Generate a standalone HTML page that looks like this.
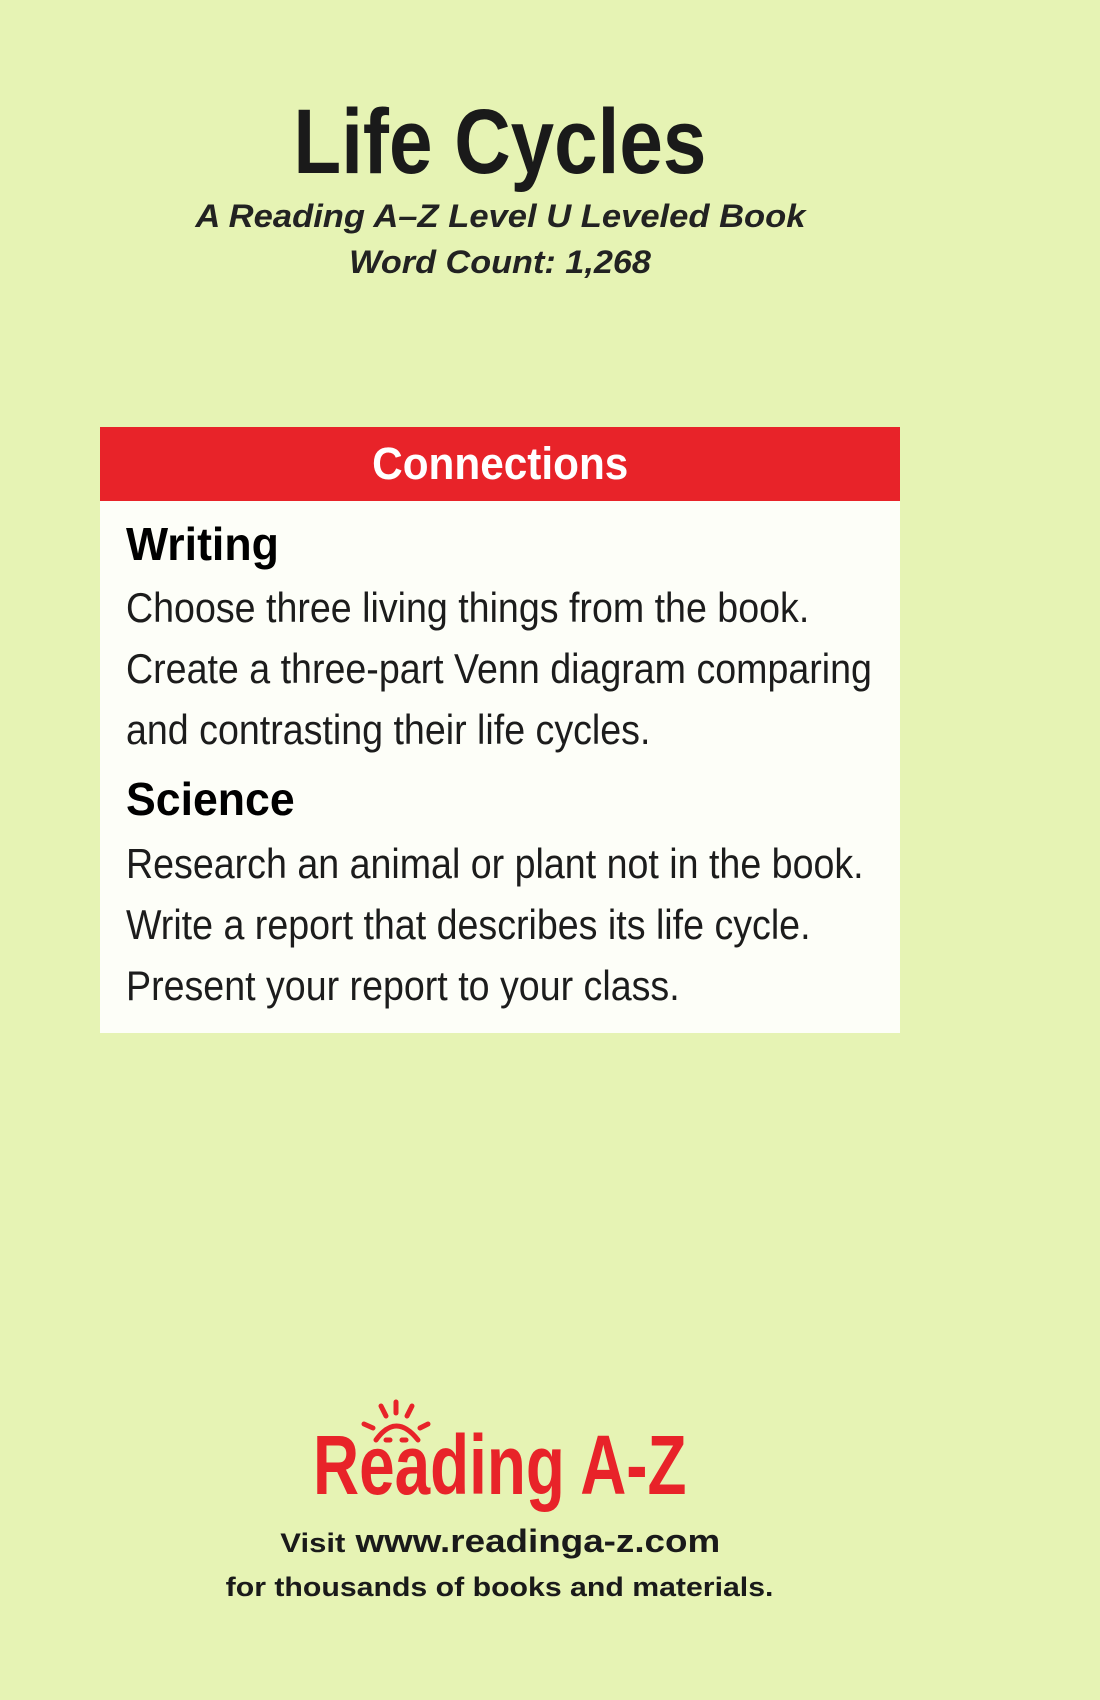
<!DOCTYPE html>
<html><head><meta charset="utf-8"><style>
html,body{margin:0;padding:0}
body{width:1100px;height:1700px;background:#e6f3b4;position:relative;overflow:hidden;font-family:"Liberation Sans",sans-serif;color:#1a1a1a}
.c{position:absolute;left:0;width:1000px;text-align:center;white-space:nowrap}
.c span.x{display:inline-block;transform-origin:center}
.t{top:92px;font-size:92px;font-weight:bold;line-height:100px}
.s{font-style:italic;font-weight:bold;font-size:32px;line-height:36px;color:#222}
.box{position:absolute;left:100px;top:427px;width:800px;height:606px;background:#fdfef8}
.hdr{position:absolute;left:0;top:0;width:800px;height:74px;background:#e82329;color:#fff;font-weight:bold;font-size:45px;text-align:center;line-height:74px}
.hdr span{display:inline-block;transform:scaleX(0.94)}
.h{position:absolute;left:26px;font-weight:bold;font-size:46px;color:#000;line-height:50px;transform:scaleX(0.97);transform-origin:left}
.p{position:absolute;left:26px;font-size:42px;line-height:61px;white-space:nowrap;color:#1c1c1c;transform:scaleX(0.895);transform-origin:left}
.logo{top:1420px;font-size:84px;font-weight:bold;color:#e82329;line-height:90px}
.v{font-weight:bold;color:#1a1a1a}
</style></head><body>
<div class="c t"><span class="x" style="transform:scaleX(0.85)">Life Cycles</span></div>
<div class="c s" style="top:198px"><span class="x" style="transform:scaleX(1.08)">A Reading A–Z Level U Leveled Book</span></div>
<div class="c s" style="top:244px"><span class="x" style="transform:scaleX(1.07)">Word Count: 1,268</span></div>
<div class="box">
<div class="hdr"><span>Connections</span></div>
<div class="h" style="top:92px">Writing</div>
<div class="p" style="top:150px">Choose three living things from the book.<br>Create a three-part Venn diagram comparing<br>and contrasting their life cycles.</div>
<div class="h" style="top:347px">Science</div>
<div class="p" style="top:406px">Research an animal or plant not in the book.<br>Write a report that describes its life cycle.<br>Present your report to your class.</div>
</div>
<div class="c logo"><span class="x" style="transform:scaleX(0.76)">Reading A-Z</span></div>
<svg style="position:absolute;left:356px;top:1398px" width="90" height="50" viewBox="0 0 90 50">
<g stroke="#e82329" stroke-width="5" stroke-linecap="round" fill="none">
<path d="M20 42 Q40 14 62 42"/>
<path d="M40 4 L40 15"/><path d="M25 8 L30 18"/><path d="M56 8 L51 18"/>
<path d="M8 26 L17 30"/><path d="M72 26 L64 30"/>
<path d="M30 42 L34 42"/><path d="M46 42 L50 42"/>
</g></svg>
<div class="c v" style="top:1523px;font-size:32px"><span class="x" style="transform:scaleX(1.15)"><span style="font-size:27px">Visit</span> www.readinga-z.com</span></div>
<div class="c v" style="top:1572px;font-size:27px"><span class="x" style="transform:scaleX(1.12)">for thousands of books and materials.</span></div>
</body></html>
